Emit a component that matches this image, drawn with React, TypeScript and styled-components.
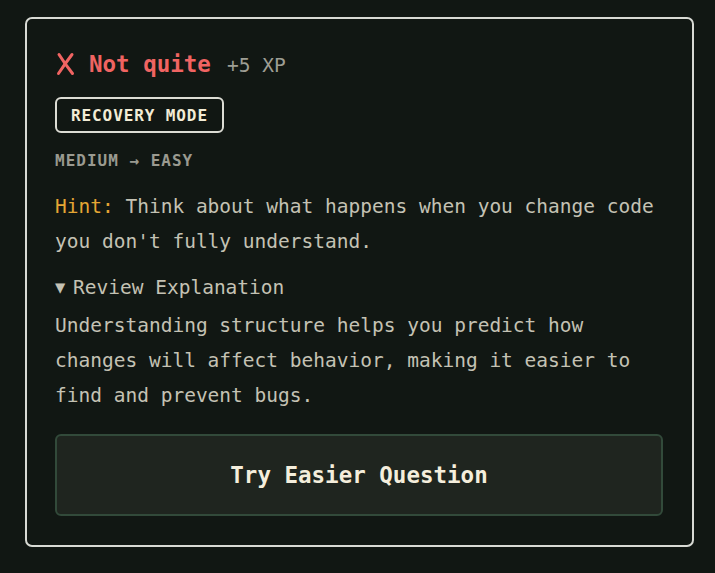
import React from "react";
import styled, { createGlobalStyle } from "styled-components";

const GlobalStyle = createGlobalStyle`
    html, body {
        margin: 0;
        padding: 0;
        background: #111713;
    }
    body {
        padding: 17px 21px 0 25px;
        font-family: "DejaVu Sans Mono", "Liberation Mono", monospace;
    }
`;

const CardStyles = styled.section`
    border: 2px solid #d8dad4;
    border-radius: 7px;
    background: #111713;
    padding: 30px 29px 29px 28px;
    display: flex;
    flex-direction: column;
    color: #c4c2b4;
`;

const TitleRowStyles = styled.div`
    display: flex;
    align-items: center;
    gap: 16px;
    height: 30px;
`;

const TitleStyles = styled.h2`
    margin: 0;
    font-size: 22.5px;
    font-weight: bold;
    color: #f06462;
    display: flex;
    align-items: center;
    gap: 14px;
`;

const CrossIcon = styled.svg`
    width: 19px;
    height: 24px;
    margin-left: 1px;
    flex-shrink: 0;
`;

const XpStyles = styled.small`
    font-size: 19.5px;
    color: #9e9e94;
    padding-top: 2px;
`;

const BadgeStyles = styled.span`
    align-self: flex-start;
    margin-top: 18px;
    height: 36px;
    box-sizing: border-box;
    padding: 0 14px;
    display: flex;
    align-items: center;
    border: 2px solid #dcdcd4;
    border-radius: 6px;
    font-size: 16px;
    font-weight: bold;
    letter-spacing: 0.9px;
    color: #f2ecd6;
`;

const LevelStyles = styled.div`
    margin-top: 18px;
    line-height: 20px;
    font-size: 16px;
    font-weight: bold;
    letter-spacing: 1px;
    color: #9a9a90;
`;

const TextStyles = styled.p<{ $gap: number }>`
    margin: ${(p) => p.$gap}px 0 0;
    font-size: 19.5px;
    line-height: 35px;
    color: #c4c2b4;
`;

const HintLabelStyles = styled.span`
    color: #e4a634;
`;

const SummaryStyles = styled.div`
    margin-top: 11px;
    font-size: 19.5px;
    line-height: 35px;
    display: flex;
    align-items: center;
    color: #c4c2b4;
`;

const ArrowStyles = styled.span`
    width: 18px;
    font-size: 17px;
`;

const ButtonStyles = styled.button`
    margin-top: 21px;
    height: 82px;
    border: 2px solid #324a3a;
    border-radius: 6px;
    background: #1f251f;
    color: #f4eedc;
    font-family: "DejaVu Sans Mono", "Liberation Mono", monospace;
    font-size: 22.5px;
    font-weight: bold;
    cursor: pointer;
`;

export default function App(): React.ReactElement {
    return (
        <>
            <GlobalStyle />
            <CardStyles>
                <TitleRowStyles>
                    <TitleStyles>
                        <CrossIcon viewBox="0 0 19 24" fill="none" stroke="#f06462" strokeWidth="3" strokeLinecap="round">
                            <path d="M3 2.5 Q9 12 16.5 21.5" />
                            <path d="M16 2.5 Q9.5 11 2.5 21.5" />
                        </CrossIcon>
                        Not quite
                    </TitleStyles>
                    <XpStyles>+5 XP</XpStyles>
                </TitleRowStyles>
                <BadgeStyles>RECOVERY MODE</BadgeStyles>
                <LevelStyles>MEDIUM → EASY</LevelStyles>
                <TextStyles $gap={18}>
                    <HintLabelStyles>Hint:</HintLabelStyles> Think about what happens when you change code
                    you don't fully understand.
                </TextStyles>
                <SummaryStyles>
                    <ArrowStyles>▼</ArrowStyles>Review Explanation
                </SummaryStyles>
                <TextStyles $gap={3}>
                    Understanding structure helps you predict how changes will affect behavior, making it
                    easier to find and prevent bugs.
                </TextStyles>
                <ButtonStyles>Try Easier Question</ButtonStyles>
            </CardStyles>
        </>
    );
}
